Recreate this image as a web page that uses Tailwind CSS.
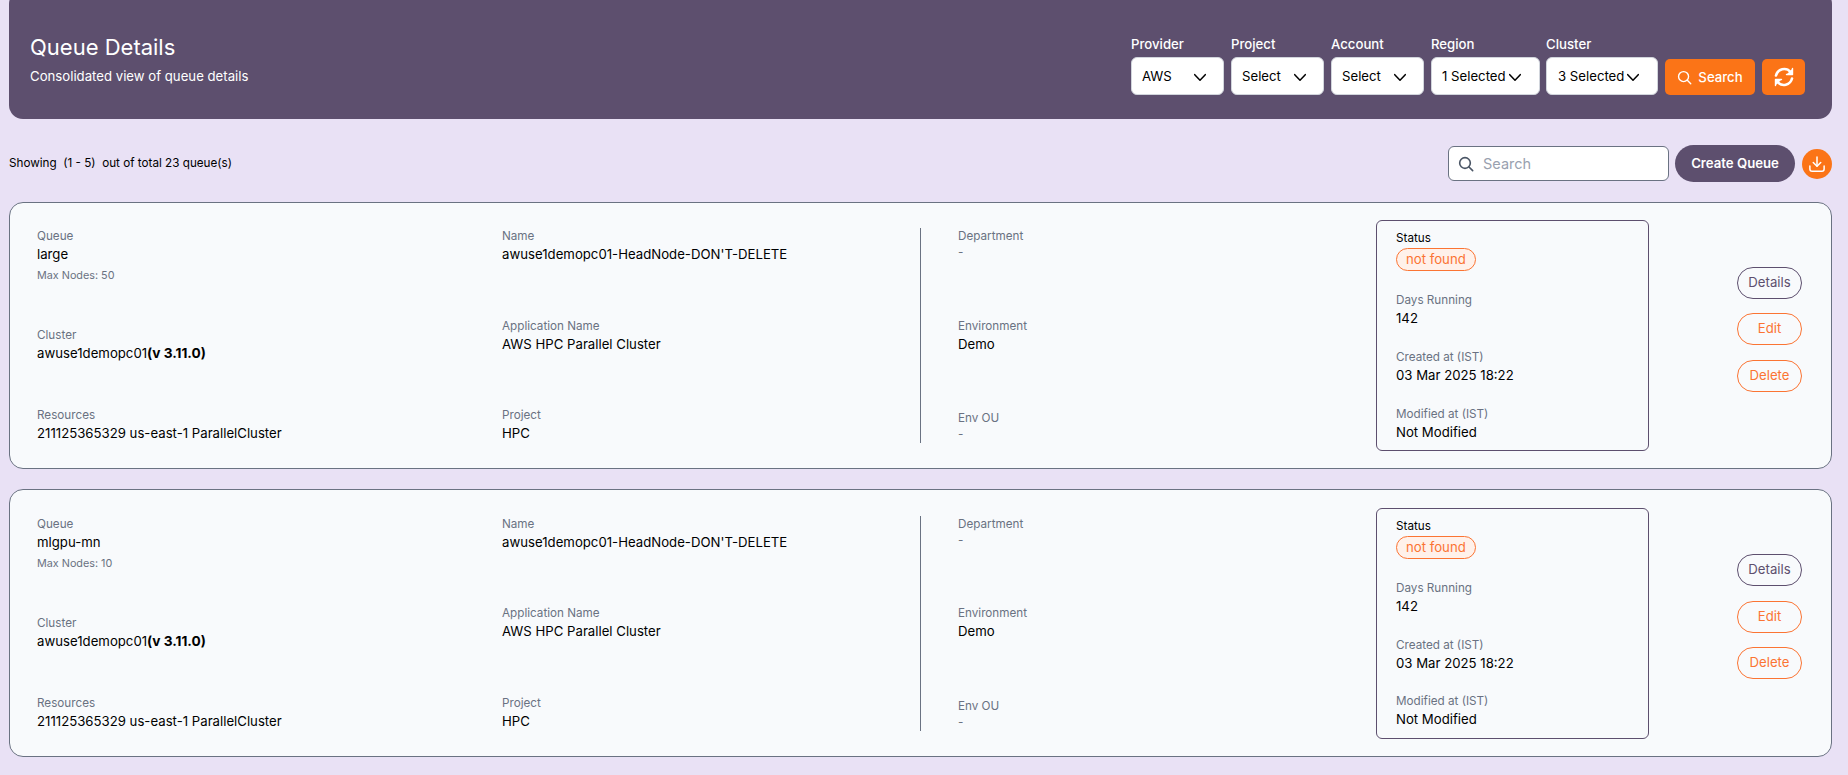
<!DOCTYPE html>
<html lang="en">
<head>
    <meta charset="UTF-8">
    <meta name="viewport" content="width=device-width, initial-scale=1.0">
    <title>Queue Details</title>
    <script src="https://cdn.jsdelivr.net/npm/@tailwindcss/browser@4"></script>
</head>
<body class="bg-[#e9e1f5] font-['Inter',sans-serif] text-black h-[775px] overflow-hidden">
<div class="pl-[9px] pr-[16px]">

    <!-- header -->
    <div class="bg-[#5d4f6e] rounded-[14px] h-[129px] -mt-[10px] pt-[10px] pl-[21px] pr-[27px] flex items-center justify-between text-white">
        <div class="-mt-[1px]">
            <h1 class="text-[22px] leading-[30px]">Queue Details</h1>
            <p class="text-[13.2px] leading-[20px] mt-[4px]">Consolidated view of queue details</p>
        </div>
        <div class="flex items-end gap-[7px] mt-[12px]">
            <div>
                <label class="block text-[13.2px] leading-[16px] font-medium mb-[5px]">Provider</label>
                <button class="w-[93px] h-[38px] bg-white border border-gray-300 rounded-md pl-[10px] pr-[16px] pt-[1px] flex items-center justify-between text-[13.2px] text-black">AWS
                    <svg class="w-[14px] h-[14px]" viewBox="0 0 24 24" fill="none" stroke="currentColor" stroke-width="2.6" stroke-linecap="round" stroke-linejoin="round"><path d="m3 8 9 9.5L21 8"/></svg>
                </button>
            </div>
            <div>
                <label class="block text-[13.2px] leading-[16px] font-medium mb-[5px]">Project</label>
                <button class="w-[93px] h-[38px] bg-white border border-gray-300 rounded-md pl-[10px] pr-[16px] pt-[1px] flex items-center justify-between text-[13.2px] text-black">Select
                    <svg class="w-[14px] h-[14px]" viewBox="0 0 24 24" fill="none" stroke="currentColor" stroke-width="2.6" stroke-linecap="round" stroke-linejoin="round"><path d="m3 8 9 9.5L21 8"/></svg>
                </button>
            </div>
            <div>
                <label class="block text-[13.2px] leading-[16px] font-medium mb-[5px]">Account</label>
                <button class="w-[93px] h-[38px] bg-white border border-gray-300 rounded-md pl-[10px] pr-[16px] pt-[1px] flex items-center justify-between text-[13.2px] text-black">Select
                    <svg class="w-[14px] h-[14px]" viewBox="0 0 24 24" fill="none" stroke="currentColor" stroke-width="2.6" stroke-linecap="round" stroke-linejoin="round"><path d="m3 8 9 9.5L21 8"/></svg>
                </button>
            </div>
            <div>
                <label class="block text-[13.2px] leading-[16px] font-medium mb-[5px]">Region</label>
                <button class="w-[109px] h-[38px] bg-white border border-gray-300 rounded-md pl-[10px] pr-[17px] pt-[1px] flex items-center justify-between text-[13.2px] text-black">1 Selected
                    <svg class="w-[14px] h-[14px]" viewBox="0 0 24 24" fill="none" stroke="currentColor" stroke-width="2.6" stroke-linecap="round" stroke-linejoin="round"><path d="m3 8 9 9.5L21 8"/></svg>
                </button>
            </div>
            <div class="-ml-[1px]">
                <label class="block text-[13.2px] leading-[16px] font-medium mb-[5px]">Cluster</label>
                <button class="w-[112px] h-[38px] bg-white border border-gray-300 rounded-md pl-[11px] pr-[17px] pt-[1px] flex items-center justify-between text-[13.2px] text-black">3 Selected
                    <svg class="w-[14px] h-[14px]" viewBox="0 0 24 24" fill="none" stroke="currentColor" stroke-width="2.6" stroke-linecap="round" stroke-linejoin="round"><path d="m3 8 9 9.5L21 8"/></svg>
                </button>
            </div>
            <button class="w-[90px] h-[36px] bg-[#fb7417] rounded-[5px] pt-[1px] flex items-center justify-center gap-[6px] text-[13.2px] font-medium">
                <svg class="w-[15px] h-[15px]" viewBox="0 0 24 24" fill="none" stroke="currentColor" stroke-width="2.2" stroke-linecap="round"><circle cx="10.5" cy="10.5" r="8"/><path d="m16.5 16.5 5.5 5.5"/></svg>
                Search
            </button>
            <button class="w-[43px] h-[36px] bg-[#fb7417] rounded-[5px] flex items-center justify-center">
                <svg class="w-[24px] h-[24px]" viewBox="0 0 24 24" fill="none" stroke="currentColor" stroke-width="2.6" stroke-linecap="round" stroke-linejoin="round"><path d="M4 10.5A8.4 8.4 0 0 1 18.5 7"/><path d="M20.5 3.5v6h-6" fill="currentColor" stroke-width="1.4"/><path d="M20 13.5A8.4 8.4 0 0 1 5.5 17"/><path d="M3.5 20.5v-6h6" fill="currentColor" stroke-width="1.4"/></svg>
            </button>
        </div>
    </div>

    <!-- toolbar -->
    <div class="h-[83px] flex items-center justify-between">
        <p class="text-[11.7px] whitespace-pre mt-[7px]">Showing  (1 - 5)  out of total 23 queue(s)</p>
        <div class="flex items-center mt-[6px]">
            <div class="w-[221px] h-[35px] bg-white border border-gray-500 rounded-md flex items-center pl-[9px] gap-[9px]">
                <svg class="w-[16px] h-[16px] text-gray-600" viewBox="0 0 24 24" fill="none" stroke="currentColor" stroke-width="2.4" stroke-linecap="round"><circle cx="10.5" cy="10.5" r="8"/><path d="m16.5 16.5 5.5 5.5"/></svg>
                <input class="w-[170px] text-[14.5px] outline-none placeholder:text-gray-400" placeholder="Search">
            </div>
            <button class="ml-[6px] w-[120px] h-[37px] rounded-full bg-[#5d4f6e] text-white text-[13.2px] font-semibold">Create Queue</button>
            <button class="ml-[7px] w-[30px] h-[30px] rounded-full bg-[#fb7417] text-white flex items-center justify-center">
                <svg class="w-[18px] h-[18px]" viewBox="0 0 24 24" fill="none" stroke="currentColor" stroke-width="2" stroke-linecap="round" stroke-linejoin="round"><path d="M12 2.5v12"/><path d="m7 10 5 5 5-5"/><path d="M2.5 14.5v4a3 3 0 0 0 3 3h13a3 3 0 0 0 3-3v-4"/></svg>
            </button>
        </div>
    </div>

    <!-- queue cards -->
    <div class="flex flex-col gap-[20px]">

        <div class="h-[267px] bg-[#f8fafc] border border-gray-500 rounded-[14px] pl-[27px] flex items-center">
            <div class="w-[465px] h-[215px] flex flex-col justify-between">
                <div class="h-[55px]">
                    <p class="text-[11.7px] leading-[16px] text-gray-500">Queue</p>
                    <p class="text-[13.2px] leading-[20px]">large</p>
                    <p class="text-[10.8px] leading-[23px] text-gray-500">Max Nodes: 50</p>
                </div>
                <div>
                    <p class="text-[11.7px] leading-[16px] text-gray-500">Cluster</p>
                    <p class="text-[13.2px] leading-[20px]">awuse1demopc01<b class="font-bold text-[13.7px]">(v 3.11.0)</b></p>
                </div>
                <div>
                    <p class="text-[11.7px] leading-[16px] text-gray-500">Resources</p>
                    <p class="text-[13.2px] leading-[20px]">211125365329 us-east-1 ParallelCluster</p>
                </div>
            </div>
            <div class="w-[419px] h-[215px] border-r border-gray-500 flex flex-col justify-between">
                <div>
                    <p class="text-[11.7px] leading-[16px] text-gray-500">Name</p>
                    <p class="text-[13.2px] leading-[20px]">awuse1demopc01-HeadNode-DON'T-DELETE</p>
                </div>
                <div>
                    <p class="text-[11.7px] leading-[16px] text-gray-500">Application Name</p>
                    <p class="text-[13.2px] leading-[20px]">AWS HPC Parallel Cluster</p>
                </div>
                <div>
                    <p class="text-[11.7px] leading-[16px] text-gray-500">Project</p>
                    <p class="text-[13.2px] leading-[20px]">HPC</p>
                </div>
            </div>
            <div class="w-[455px] h-[215px] pl-[37px] flex flex-col justify-between">
                <div class="h-[34px]">
                    <p class="text-[11.7px] leading-[16px] text-gray-500">Department</p>
                    <p class="text-[11.7px] leading-[16px] text-gray-500">-</p>
                </div>
                <div>
                    <p class="text-[11.7px] leading-[16px] text-gray-500">Environment</p>
                    <p class="text-[13.2px] leading-[20px]">Demo</p>
                </div>
                <div class="h-[34px]">
                    <p class="text-[11.7px] leading-[18px] text-gray-500">Env OU</p>
                    <p class="text-[11.7px] leading-[14px] text-gray-500">-</p>
                </div>
            </div>
            <div class="w-[273px] h-[231px] border border-[#5d4f6e] rounded-md pl-[19px] pt-[9px] pb-[8px] flex flex-col justify-between">
                <div>
                    <p class="text-[11.7px] leading-[16px]">Status</p>
                    <span class="mt-[1px] inline-flex items-center h-[23px] px-[9px] rounded-full border border-[#fb7433] bg-[#fff1ea] text-[#fb7433] text-[13.2px]">not found</span>
                </div>
                <div>
                    <p class="text-[11.7px] leading-[16px] text-gray-500">Days Running</p>
                    <p class="text-[13.2px] leading-[20px]">142</p>
                </div>
                <div>
                    <p class="text-[11.7px] leading-[16px] text-gray-500">Created at (IST)</p>
                    <p class="text-[13.2px] leading-[20px]">03 Mar 2025 18:22</p>
                </div>
                <div>
                    <p class="text-[11.7px] leading-[16px] text-gray-500">Modified at (IST)</p>
                    <p class="text-[13.2px] leading-[20px]">Not Modified</p>
                </div>
            </div>
            <div class="ml-[88px] mb-[13px] flex flex-col gap-[14.5px]">
                <button class="w-[65px] h-[32px] rounded-full border border-[#5d4f6e] text-[#5d4f6e] text-[13.2px]">Details</button>
                <button class="w-[65px] h-[32px] rounded-full border border-[#fb7433] text-[#fb7433] text-[13.2px]">Edit</button>
                <button class="w-[65px] h-[32px] rounded-full border border-[#fb7433] text-[#fb7433] text-[13.2px]">Delete</button>
            </div>
        </div>

        <div class="h-[268px] bg-[#f8fafc] border border-gray-500 rounded-[14px] pl-[27px] flex items-center">
            <div class="w-[465px] h-[215px] flex flex-col justify-between">
                <div class="h-[55px]">
                    <p class="text-[11.7px] leading-[16px] text-gray-500">Queue</p>
                    <p class="text-[13.2px] leading-[20px]">mlgpu-mn</p>
                    <p class="text-[10.8px] leading-[23px] text-gray-500">Max Nodes: 10</p>
                </div>
                <div>
                    <p class="text-[11.7px] leading-[16px] text-gray-500">Cluster</p>
                    <p class="text-[13.2px] leading-[20px]">awuse1demopc01<b class="font-bold text-[13.7px]">(v 3.11.0)</b></p>
                </div>
                <div>
                    <p class="text-[11.7px] leading-[16px] text-gray-500">Resources</p>
                    <p class="text-[13.2px] leading-[20px]">211125365329 us-east-1 ParallelCluster</p>
                </div>
            </div>
            <div class="w-[419px] h-[215px] border-r border-gray-500 flex flex-col justify-between">
                <div>
                    <p class="text-[11.7px] leading-[16px] text-gray-500">Name</p>
                    <p class="text-[13.2px] leading-[20px]">awuse1demopc01-HeadNode-DON'T-DELETE</p>
                </div>
                <div>
                    <p class="text-[11.7px] leading-[16px] text-gray-500">Application Name</p>
                    <p class="text-[13.2px] leading-[20px]">AWS HPC Parallel Cluster</p>
                </div>
                <div>
                    <p class="text-[11.7px] leading-[16px] text-gray-500">Project</p>
                    <p class="text-[13.2px] leading-[20px]">HPC</p>
                </div>
            </div>
            <div class="w-[455px] h-[215px] pl-[37px] flex flex-col justify-between">
                <div class="h-[34px]">
                    <p class="text-[11.7px] leading-[16px] text-gray-500">Department</p>
                    <p class="text-[11.7px] leading-[16px] text-gray-500">-</p>
                </div>
                <div>
                    <p class="text-[11.7px] leading-[16px] text-gray-500">Environment</p>
                    <p class="text-[13.2px] leading-[20px]">Demo</p>
                </div>
                <div class="h-[34px]">
                    <p class="text-[11.7px] leading-[18px] text-gray-500">Env OU</p>
                    <p class="text-[11.7px] leading-[14px] text-gray-500">-</p>
                </div>
            </div>
            <div class="w-[273px] h-[231px] border border-[#5d4f6e] rounded-md pl-[19px] pt-[9px] pb-[8px] flex flex-col justify-between">
                <div>
                    <p class="text-[11.7px] leading-[16px]">Status</p>
                    <span class="mt-[1px] inline-flex items-center h-[23px] px-[9px] rounded-full border border-[#fb7433] bg-[#fff1ea] text-[#fb7433] text-[13.2px]">not found</span>
                </div>
                <div>
                    <p class="text-[11.7px] leading-[16px] text-gray-500">Days Running</p>
                    <p class="text-[13.2px] leading-[20px]">142</p>
                </div>
                <div>
                    <p class="text-[11.7px] leading-[16px] text-gray-500">Created at (IST)</p>
                    <p class="text-[13.2px] leading-[20px]">03 Mar 2025 18:22</p>
                </div>
                <div>
                    <p class="text-[11.7px] leading-[16px] text-gray-500">Modified at (IST)</p>
                    <p class="text-[13.2px] leading-[20px]">Not Modified</p>
                </div>
            </div>
            <div class="ml-[88px] mb-[13px] flex flex-col gap-[14.5px]">
                <button class="w-[65px] h-[32px] rounded-full border border-[#5d4f6e] text-[#5d4f6e] text-[13.2px]">Details</button>
                <button class="w-[65px] h-[32px] rounded-full border border-[#fb7433] text-[#fb7433] text-[13.2px]">Edit</button>
                <button class="w-[65px] h-[32px] rounded-full border border-[#fb7433] text-[#fb7433] text-[13.2px]">Delete</button>
            </div>
        </div>

    </div>
</div>
</body>
</html>
